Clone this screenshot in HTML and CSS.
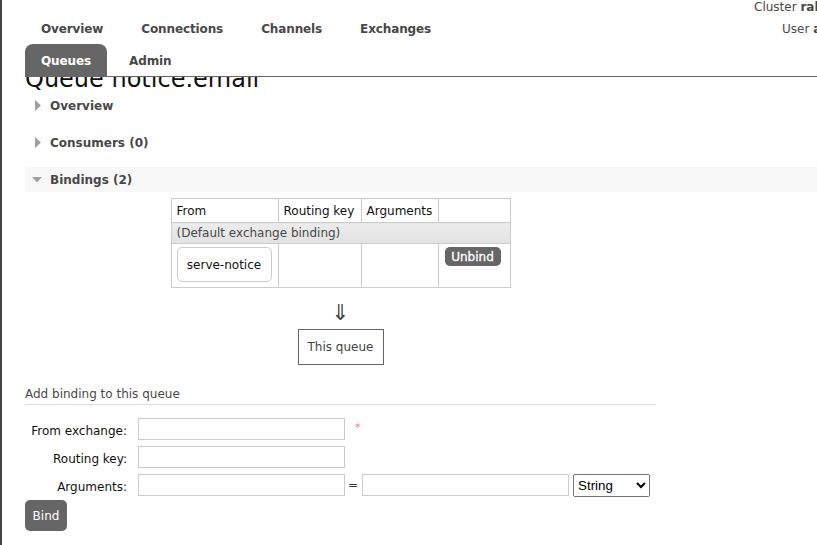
FILE: index.html
```html
<!DOCTYPE html>
<html>
<head>
<meta charset="utf-8">
<title>Queue notice.email</title>
<link rel="stylesheet" href="styles.css">
</head>
<body>
<div class="page">
  <header class="header">
    <ul class="tabs">
      <li class="tab">Overview</li>
      <li class="tab">Connections</li>
      <li class="tab">Channels</li>
      <li class="tab">Exchanges</li>
      <li class="tab active">Queues</li>
      <li class="tab">Admin</li>
    </ul>
    <div class="info">
      <div class="info-line">Cluster <b>rabbit@localhost</b></div>
      <div class="info-line user">User <b>admin</b></div>
    </div>
  </header>

  <div class="title-clip"><h1 class="title">Queue notice.email</h1></div>

  <section class="sec">
    <h2 class="sec-head"><svg class="tri" width="12" height="11" viewBox="0 0 12 11"><path d="M3 0 L9 5.5 L3 11 Z" fill="#a0a0a0"/></svg>Overview</h2>
  </section>
  <section class="sec">
    <h2 class="sec-head"><svg class="tri" width="12" height="11" viewBox="0 0 12 11"><path d="M3 0 L9 5.5 L3 11 Z" fill="#a0a0a0"/></svg>Consumers (0)</h2>
  </section>
  <section class="sec">
    <h2 class="sec-head open"><svg class="tri" width="12" height="6" viewBox="0 0 12 6"><path d="M0 0 L10 0 L5 5.5 Z" fill="#a0a0a0"/></svg>Bindings (2)</h2>
    <div class="bindings">
      <table class="btable">
        <colgroup><col class="c1"><col class="c2"><col class="c3"><col class="c4"></colgroup>
        <thead>
          <tr><th>From</th><th>Routing key</th><th>Arguments</th><th></th></tr>
        </thead>
        <tbody>
          <tr class="default-row"><td colspan="4">(Default exchange binding)</td></tr>
          <tr class="data-row">
            <td><span class="xchg">serve-notice</span></td>
            <td></td>
            <td></td>
            <td><button class="btn small">Unbind</button></td>
          </tr>
        </tbody>
      </table>
      <div class="arrow">&#8659;</div>
      <div class="this-queue">This queue</div>
    </div>

    <h3 class="form-title">Add binding to this queue</h3>
    <form class="bform">
      <div class="frow">
        <label class="flabel">From exchange:</label>
        <input class="finput" type="text">
        <span class="req">*</span>
      </div>
      <div class="frow">
        <label class="flabel">Routing key:</label>
        <input class="finput" type="text">
      </div>
      <div class="frow">
        <label class="flabel">Arguments:</label>
        <input class="finput" type="text">
        <span class="eq">=</span>
        <input class="finput" type="text">
        <select class="fselect"><option>String</option></select>
      </div>
      <button class="btn bind" type="button">Bind</button>
    </form>
  </section>
</div>
</body>
</html>
```

FILE: styles.css
```css
html, body {
  margin: 0;
  padding: 0;
  height: 100%;
  overflow: hidden;
  background: #fff;
}

body {
  font-family: "DejaVu Sans", Verdana, sans-serif;
  font-size: 12px;
  color: #000;
}

.page {
  min-height: 100%;
  border-left: 2px solid #444;
  padding-left: 23px;
  box-sizing: border-box;
}

.header {
  display: flex;
  align-items: flex-start;
  border-bottom: 1px solid #666;
  height: 76px;
}

.tabs {
  list-style: none;
  margin: 0;
  padding: 12px 0 0 0;
  width: 480px;
  flex: none;
  display: flex;
  flex-wrap: wrap;
  column-gap: 6px;
}

.tab {
  height: 32px;
  box-sizing: border-box;
  padding: 2px 16px 0;
  line-height: 30px;
  font-weight: bold;
  color: #484848;
  letter-spacing: -0.12px;
  border-radius: 8px 8px 0 0;
}

.tab.active {
  background: #666;
  color: #fff;
}

.info {
  margin-left: 249px;
  white-space: nowrap;
  color: #484848;
  flex: none;
}

.info-line {
  line-height: 22px;
  margin-top: -4px;
  height: 22px;
}

.info-line.user {
  margin-top: 0;
  padding-left: 28px;
}

.title-clip {
  height: 16px;
  overflow: hidden;
  display: flex;
  align-items: flex-end;
}

.title {
  margin: 0;
  font-size: 24px;
  line-height: 28px;
  font-weight: normal;
  color: #111;
  white-space: nowrap;
}

.sec-head {
  margin: 0 0 12px 0;
  height: 25px;
  display: flex;
  align-items: center;
  padding-left: 7px;
  font-size: 12px;
  font-weight: bold;
  color: #484848;
}

.sec-head.open {
  background: #f8f8f8;
  margin-bottom: 6px;
}

.tri {
  margin-right: 6px;
  flex: none;
}

.sec-head.open .tri {
  margin-top: 1px;
}

.bindings {
  width: 631px;
  display: flex;
  flex-direction: column;
  align-items: center;
}

.btable {
  border-collapse: collapse;
  table-layout: fixed;
  width: 339px;
  border: 1px solid #ccc;
}

.c1 { width: 107px; }
.c2 { width: 83px; }
.c3 { width: 77px; }
.c4 { width: 72px; }

.btable th {
  text-align: left;
  font-weight: normal;
  height: 23px;
  padding: 0 5px;
  border: 1px solid #ccc;
  color: #111;
  white-space: nowrap;
}

.btable td {
  border: 1px solid #ccc;
  padding: 3px 5px;
  vertical-align: top;
}

.default-row td {
  background: linear-gradient(#ececec, #e2e2e2);
  color: #484848;
  height: 14px;
  padding: 3px 5px 2px;
  line-height: 15px;
}

.data-row td {
  height: 37px;
}

.xchg {
  display: flex;
  align-items: center;
  justify-content: center;
  width: 95px;
  height: 35px;
  box-sizing: border-box;
  border: 1px solid #ccc;
  border-radius: 5px;
  color: #111;
}

.btn {
  background: #666;
  color: #fff;
  border: none;
  border-radius: 5px;
  font-family: "DejaVu Sans", Verdana, sans-serif;
  padding: 0;
  cursor: pointer;
}

.btn.small {
  width: 56px;
  height: 19px;
  font-size: 12px;
  font-weight: normal;
  margin-left: 1px;
  -webkit-text-stroke: 0.3px #fff;
}

.arrow {
  margin-top: 13px;
  font-size: 22px;
  line-height: 23px;
  color: #444;
}

.this-queue {
  margin-top: 5px;
  width: 86px;
  height: 36px;
  box-sizing: border-box;
  border: 1px solid #666;
  display: flex;
  align-items: center;
  justify-content: center;
  color: #444;
}

.form-title {
  width: 631px;
  margin: 22px 0 0 0;
  font-size: 12px;
  font-weight: normal;
  color: #484848;
  line-height: 14px;
  padding-bottom: 3px;
  border-bottom: 1px solid #ddd;
}

.bform {
  margin-top: 13px;
  display: flex;
  flex-direction: column;
  row-gap: 6px;
  align-items: flex-start;
}

.frow {
  display: flex;
  align-items: center;
  height: 22px;
}

.flabel {
  width: 102px;
  text-align: right;
  margin-right: 11px;
  padding-top: 3px;
  color: #111;
}

.finput {
  width: 207px;
  height: 22px;
  box-sizing: border-box;
  border: 1px solid #ccc;
  margin: 0;
  padding: 1px 3px;
  font: 12px "DejaVu Sans", Verdana, sans-serif;
}

.req {
  color: #f08080;
  font-size: 11px;
  margin-left: 10px;
  align-self: flex-start;
  margin-top: 3px;
}

.eq {
  margin: 0 4px 0 3px;
  color: #333;
}

.fselect {
  margin-left: 4px;
  width: 77px;
  height: 23px;
  font: 13.33px "Liberation Sans", Arial, sans-serif;
  color: #000;
}

.bind {
  margin-top: -2px;
  width: 42px;
  height: 31px;
  font-size: 12px;
}
```
